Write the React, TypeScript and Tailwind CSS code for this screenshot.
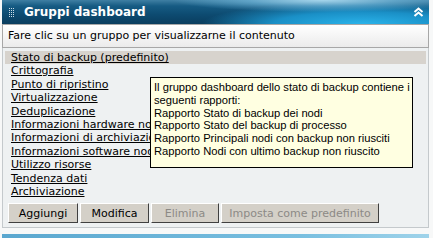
const groups = [
  'Stato di backup (predefinito)',
  'Crittografia',
  'Punto di ripristino',
  'Virtualizzazione',
  'Deduplicazione',
  'Informazioni hardware nodi',
  'Informazioni di archiviazione',
  'Informazioni software nodi',
  'Utilizzo risorse',
  'Tendenza dati',
  'Archiviazione',
]

const tipLines = [
  'Il gruppo dashboard dello stato di backup contiene i',
  'seguenti rapporti:',
  'Rapporto Stato di backup dei nodi',
  'Rapporto Stato del backup di processo',
  'Rapporto Principali nodi con backup non riusciti',
  'Rapporto Nodi con ultimo backup non riuscito',
]

function Grip() {
  return (
    <svg width="6" height="9" viewBox="0 0 6 9" className="shrink-0">
      {[0, 2, 4, 6, 8].map(y =>
        [0, 2, 4].map(x => <rect key={`${x}-${y}`} x={x} y={y} width="1" height="1" fill="#c9dbe6" />)
      )}
    </svg>
  )
}

function Collapse() {
  return (
    <svg width="11" height="10" viewBox="0 0 11 10">
      <path d="M1.5 5 L5.5 1.5 L9.5 5" fill="none" stroke="#fff" strokeWidth="2" />
      <path d="M1.5 9 L5.5 5.5 L9.5 9" fill="none" stroke="#fff" strokeWidth="2" />
    </svg>
  )
}

function Btn({ label, disabled, w }: { label: string; disabled?: boolean; w: string }) {
  return (
    <button
      className={`${w} h-[20px] bg-[#d4d0c8] border border-t-white border-l-white border-r-[#404040] border-b-[#404040] text-[11px] leading-none ${disabled ? 'text-[#8c8a86]' : 'text-black'}`}
    >
      {label}
    </button>
  )
}

export default function App() {
  return (
    <div className="relative w-[433px] h-[238px] overflow-hidden bg-[#f7f8f8] font-['DejaVu_Sans',sans-serif]">
      <div className="ml-[2px] w-[427px]">
        {/* header */}
        <div className="h-[24px] flex items-center pl-[7px] pr-[5px] bg-[linear-gradient(180deg,#3f7fa3_0%,#165b83_25%,#0d4b71_60%,#0a3d5e_100%)] relative overflow-hidden">
          <div className="absolute inset-0 bg-[radial-gradient(ellipse_160px_22px_at_360px_24px,#2ab3ea_0%,#1a8fc6_55%,transparent_100%)]" />
          <div className="absolute inset-0 bg-[radial-gradient(ellipse_150px_12px_at_320px_0px,#a6d6ec_0%,rgba(120,190,225,0.6)_50%,transparent_100%)]" />
          <Grip />
          <span className="relative ml-[9px] text-white font-bold text-[12px] leading-none">Gruppi dashboard</span>
          <span className="relative ml-auto"><Collapse /></span>
        </div>

        {/* hint bar */}
        <div className="h-[24px] flex items-center pl-[5px] border border-[#a7a7a7] bg-[linear-gradient(180deg,#ffffff,#ebebeb)] text-[11px] text-black">
          Fare clic su un gruppo per visualizzarne il contenuto
        </div>

        {/* list panel */}
        <div className="h-[180px] bg-[#eef1f2] border-x border-b border-[#c4c9cc] pt-[3px] px-[2px]">
          <ul className="text-[11px] text-black">
            {groups.map((g, i) => (
              <li
                key={g}
                className={`h-[13.4px] leading-[13.4px] pl-[6px] whitespace-nowrap overflow-hidden ${i === 0 ? 'bg-[#d7d3cd]' : ''}`}
              >
                <span className="underline underline-offset-[1px]">{g}</span>
              </li>
            ))}
          </ul>
          <div className="mt-[5px] ml-[3px] flex gap-[2px]">
            <Btn label="Aggiungi" w="w-[70px]" />
            <Btn label="Modifica" w="w-[69px]" />
            <Btn label="Elimina" w="w-[68px]" disabled />
            <Btn label="Imposta come predefinito" w="w-[158px]" disabled />
          </div>
        </div>

        {/* next panel header peeking */}
        <div className="mt-[6px] h-[10px] bg-[linear-gradient(90deg,#5aa7cf,#79bfe0_70%,#9fd3ea)]" />
      </div>

      {/* tooltip */}
      <div className="absolute left-[150px] top-[77px] w-[263px] h-[91px] bg-[#ffffe1] border border-black pl-[3px] pt-[3px] font-['Liberation_Sans',sans-serif] text-[11.2px] leading-[12.8px] text-black">
        {tipLines.map(l => (
          <div key={l} className="whitespace-nowrap">{l}</div>
        ))}
      </div>
    </div>
  )
}
